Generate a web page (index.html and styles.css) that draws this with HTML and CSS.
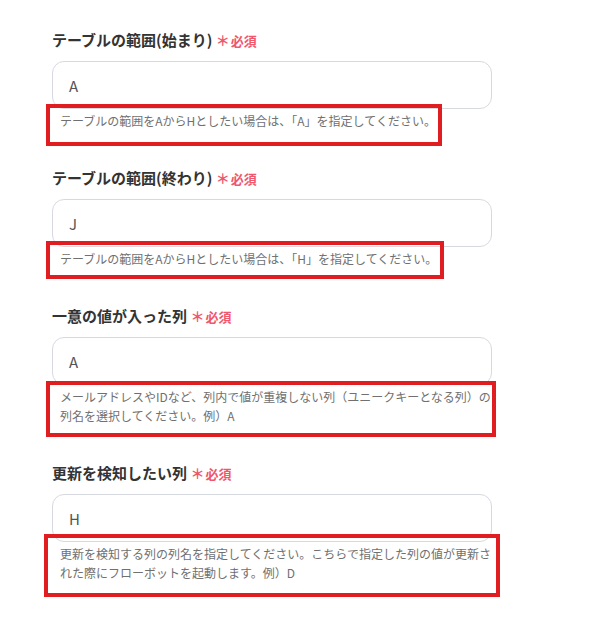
FILE: index.html
```html
<!DOCTYPE html>
<html lang="ja">
<head>
    <meta charset="UTF-8">
    <meta name="viewport" content="width=device-width, initial-scale=1.0">
    <title>テーブル設定</title>
    <link rel="stylesheet" href="styles.css">
</head>
<body>

    <!-- Settings Form -->
    <main class="form">

        <div class="field">
            <label class="label">テーブルの範囲(始まり) <span class="req"><span class="star">＊</span>必須</span></label>
            <div class="input">A</div>
            <p class="help">テーブルの範囲をAからHとしたい場合は、「A」を指定してください。<span class="mark mark-1"></span></p>
        </div>

        <div class="field">
            <label class="label">テーブルの範囲(終わり) <span class="req"><span class="star">＊</span>必須</span></label>
            <div class="input">J</div>
            <p class="help">テーブルの範囲をAからHとしたい場合は、「H」を指定してください。<span class="mark mark-2"></span></p>
        </div>

        <div class="field">
            <label class="label">一意の値が入った列 <span class="req"><span class="star">＊</span>必須</span></label>
            <div class="input">A</div>
            <p class="help">メールアドレスやIDなど、列内で値が重複しない列（ユニークキーとなる列）の列名を選択してください。例）A<span class="mark mark-3"></span></p>
        </div>

        <div class="field">
            <label class="label">更新を検知したい列 <span class="req"><span class="star">＊</span>必須</span></label>
            <div class="input">H</div>
            <p class="help">更新を検知する列の列名を指定してください。こちらで指定した列の値が更新された際にフローボットを起動します。例）D<span class="mark mark-4"></span></p>
        </div>

    </main>

</body>
</html>
```

FILE: styles.css
```css
/* General Styles */
* { margin: 0; padding: 0; box-sizing: border-box; font-family: "Noto Sans CJK JP", "Noto Sans", sans-serif; }
body { background: #fff; }

/* Form */
.form { width: 440px; margin-left: 52px; padding-top: 29px; }
.field { margin-bottom: 37px; }
.label { display: block; font-size: 15px; line-height: 22px; font-weight: bold; color: #333; margin-bottom: 9px; }
.req { color: #f0566c; font-size: 13px; font-weight: bold; }
.star { font-size: 14px; margin-right: 1px; }

/* Input */
.input { height: 48px; border: 1px solid #d6dae0; border-radius: 12px; padding: 0 16px;
    display: flex; align-items: center; font-size: 15px; color: #555; }

/* Help Text */
.help { position: relative; margin-top: 2px; padding-left: 8px; font-size: 12px; line-height: 19px;
    color: #707070; text-spacing-trim: trim-all; }

/* Red annotation boxes */
.mark { position: absolute; left: -6px; top: -7px; bottom: -16px; border: 4px solid #e01e22; }
.mark-1 { width: 396px; }
.mark-2 { width: 398px; top: -8px; bottom: -11px; }
.mark-3 { width: 450px; top: -6px; bottom: -12px; }
.mark-4 { width: 456px; left: -8px; top: -10px; bottom: -15px; }
```
